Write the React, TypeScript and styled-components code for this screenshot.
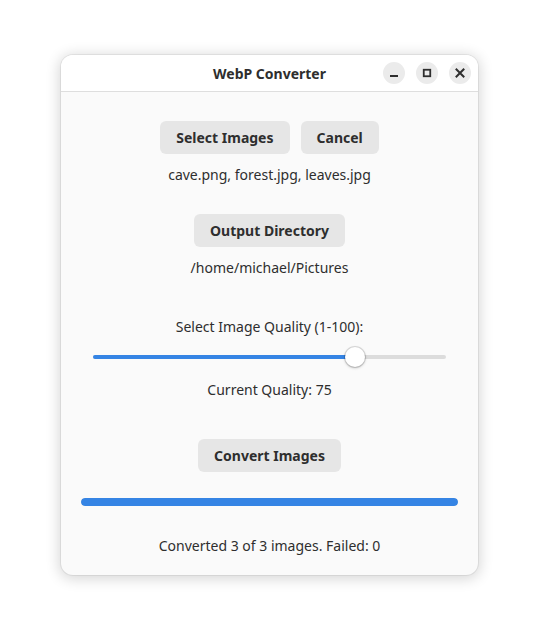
import React from "react";
import styled, { createGlobalStyle } from "styled-components";

const Global = createGlobalStyle`
  html, body { margin: 0; padding: 0; background: #ffffff; }
  body { font-family: "Noto Sans", "DejaVu Sans", sans-serif; color: #2e2e2e; }
  * { box-sizing: border-box; }
`;

const Page = styled.div`
  width: 539px;
  height: 642px;
  padding: 55px 0 0 61px;
`;

const Window = styled.div`
  width: 417px;
  height: 520px;
  border-radius: 12px;
  background: #fafafa;
  overflow: hidden;
  box-shadow: 0 0 0 1px rgba(0, 0, 0, 0.06), 0 2px 14px 2px rgba(0, 0, 0, 0.16);
  display: flex;
  flex-direction: column;
`;

const TitleBar = styled.div`
  height: 37px;
  flex: none;
  background: #ffffff;
  border-bottom: 1px solid #dedede;
  display: flex;
  align-items: center;
  justify-content: center;
  position: relative;
`;

const Title = styled.div`
  font-weight: 700;
  font-size: 14px;
  color: #2e2e2e;
`;

const Controls = styled.div`
  position: absolute;
  right: 7px;
  top: 7px;
  display: flex;
  gap: 11px;
`;

const CtrlButton = styled.div`
  width: 22px;
  height: 22px;
  border-radius: 50%;
  background: #ebebeb;
  display: flex;
  align-items: center;
  justify-content: center;
  color: #2e2e2e;
`;

const Body = styled.div`
  flex: 1;
  display: flex;
  flex-direction: column;
  align-items: center;
`;

const Row = styled.div<{ $mt: number }>`
  margin-top: ${(p) => p.$mt}px;
  display: flex;
  gap: 11px;
`;

const Button = styled.button<{ $mt?: number }>`
  margin-top: ${(p) => p.$mt ?? 0}px;
  height: 33px;
  padding: 0 16px;
  border: none;
  border-radius: 6px;
  background: #e6e6e6;
  font-family: "Noto Sans", "DejaVu Sans", sans-serif;
  font-weight: 700;
  font-size: 14px;
  color: #2e2e2e;
`;

const Label = styled.div<{ $mt: number }>`
  margin-top: ${(p) => p.$mt}px;
  height: 20px;
  line-height: 20px;
  font-size: 14px;
  color: #2e2e2e;
  white-space: nowrap;
`;

const SliderWrap = styled.div<{ $mt: number }>`
  margin-top: ${(p) => p.$mt}px;
  align-self: stretch;
  margin-left: 32px;
  margin-right: 32px;
  height: 20px;
  position: relative;
  display: flex;
  align-items: center;
`;

const Track = styled.div`
  flex: 1;
  height: 4px;
  border-radius: 2px;
  background: #dcdcdc;
  overflow: hidden;
`;

const Fill = styled.div`
  height: 100%;
  background: #3584e4;
`;

const Thumb = styled.div`
  position: absolute;
  top: 0;
  width: 20px;
  height: 20px;
  margin-left: -10px;
  border-radius: 50%;
  background: #ffffff;
  box-shadow: 0 0 0 1px rgba(0, 0, 0, 0.12), 0 1px 3px rgba(0, 0, 0, 0.25);
`;

const Progress = styled.div<{ $mt: number }>`
  margin-top: ${(p) => p.$mt}px;
  align-self: stretch;
  margin-left: 20px;
  margin-right: 20px;
  height: 8px;
  border-radius: 4px;
  background: #dcdcdc;
  overflow: hidden;
`;

const ProgressFill = styled.div`
  height: 100%;
  border-radius: 4px;
  background: #3584e4;
`;

export default function App() {
  const quality = 75;
  const pct = ((quality - 1) / 99) * 99.3;
  const done = 3;
  const total = 3;
  return (
    <Page>
      <Global />
      <Window>
        <TitleBar>
          <Title>WebP Converter</Title>
          <Controls>
            <CtrlButton>
              <svg width="16" height="16" viewBox="0 0 16 16">
                <rect x="4" y="10" width="8" height="2" fill="currentColor" />
              </svg>
            </CtrlButton>
            <CtrlButton>
              <svg width="16" height="16" viewBox="0 0 16 16">
                <rect x="4.75" y="4.75" width="6.5" height="6.5" fill="none" stroke="currentColor" strokeWidth="1.8" />
              </svg>
            </CtrlButton>
            <CtrlButton>
              <svg width="16" height="16" viewBox="0 0 16 16">
                <path d="M4.5 4.5 L11.5 11.5 M11.5 4.5 L4.5 11.5" stroke="currentColor" strokeWidth="2" strokeLinecap="square" />
              </svg>
            </CtrlButton>
          </Controls>
        </TitleBar>
        <Body>
          <Row $mt={29}>
            <Button>Select Images</Button>
            <Button>Cancel</Button>
          </Row>
          <Label $mt={11}>cave.png, forest.jpg, leaves.jpg</Label>
          <Button $mt={29}>Output Directory</Button>
          <Label $mt={11}>/home/michael/Pictures</Label>
          <Label $mt={39}>Select Image Quality (1-100):</Label>
          <SliderWrap $mt={10}>
            <Track>
              <Fill style={{ width: `${pct}%` }} />
            </Track>
            <Thumb style={{ left: `${pct}%` }} />
          </SliderWrap>
          <Label $mt={13}>Current Quality: {quality}</Label>
          <Button $mt={39}>Convert Images</Button>
          <Progress $mt={26}>
            <ProgressFill style={{ width: `${(done / total) * 100}%` }} />
          </Progress>
          <Label $mt={30}>
            Converted {done} of {total} images. Failed: 0
          </Label>
        </Body>
      </Window>
    </Page>
  );
}
